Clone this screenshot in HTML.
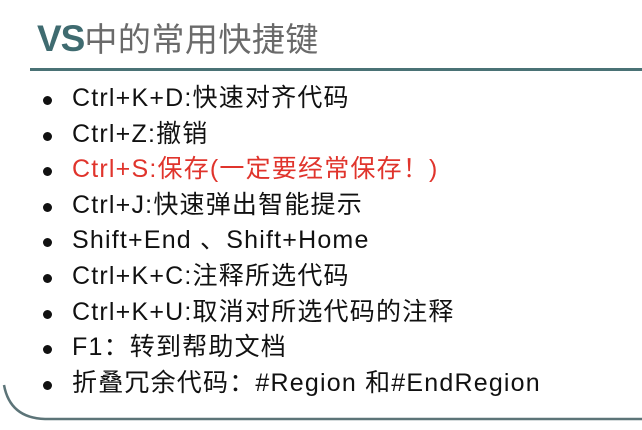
<!DOCTYPE html>
<html><head><meta charset="utf-8"><style>
html,body{margin:0;padding:0;width:642px;height:430px;background:#fff;overflow:hidden;position:relative;font-family:"Liberation Sans","Noto Sans CJK SC",sans-serif}
.title{position:absolute;left:37px;top:18px;font-size:33px;line-height:42px;color:#6a6a6a;white-space:nowrap;letter-spacing:0.5px}
.title b{font-family:"Liberation Sans",sans-serif;font-weight:bold;color:#3f6b70;font-size:37px;letter-spacing:-1px}
.rule{position:absolute;left:30px;top:68px;width:612px;height:3px;background:#4a7275}
ul{position:absolute;left:40px;top:81px;margin:0;padding:0;list-style:none}
li{font-size:25px;letter-spacing:1.2px;line-height:35.6px;height:35.6px;color:#111;white-space:nowrap;position:relative;padding-left:32px}
li:before{content:"";position:absolute;left:3px;top:15px;width:9px;height:9px;border-radius:50%;background:#111}
li.r{color:#e0342c}
</style></head><body>
<div class="title"><b>VS</b>中的常用快捷键</div>
<div class="rule"></div>
<ul>
<li>Ctrl+K+D:快速对齐代码</li>
<li>Ctrl+Z:撤销</li>
<li class="r">Ctrl+S:保存(一定要经常保存！)</li>
<li>Ctrl+J:快速弹出智能提示</li>
<li>Shift+End 、Shift+Home</li>
<li>Ctrl+K+C:注释所选代码</li>
<li>Ctrl+K+U:取消对所选代码的注释</li>
<li>F1：转到帮助文档</li>
<li>折叠冗余代码：#Region 和#EndRegion</li>
</ul>
<svg style="position:absolute;left:0;top:0" width="642" height="430"><path d="M4 385 Q10 418 45 419 L642 419" fill="none" stroke="#5c7478" stroke-width="2.5"/></svg>
</body></html>
